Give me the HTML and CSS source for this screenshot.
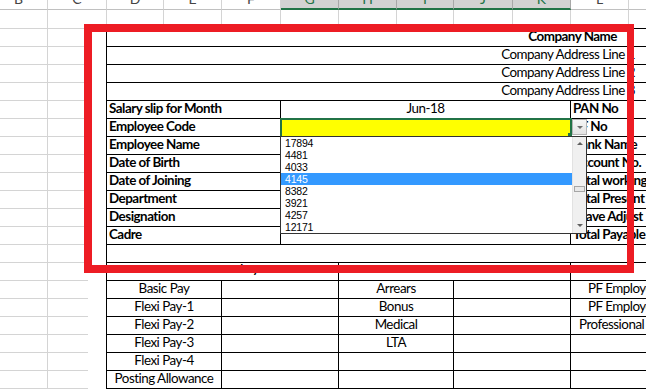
FILE: index.html
```html
<!DOCTYPE html>
<html>
<head>
<meta charset="utf-8">
<title>Salary Slip</title>
<link rel="stylesheet" href="styles.css">
</head>
<body>
<div class="sheet">
  <div class="h"><span>B</span></div><div class="h"><span>C</span></div><div class="h"><span>D</span></div><div class="h"><span>E</span></div><div class="h"><span>F</span></div><div class="h on"><span>G</span></div><div class="h on"><span>H</span></div><div class="h on"><span>I</span></div><div class="h on"><span>J</span></div><div class="h on"><span>K</span></div><div class="h"><span>L</span></div><div class="h"><span>M</span></div>

  <div class="c"></div><div class="c"></div><div class="c top"></div><div class="c top"></div><div class="c top"></div><div class="c top"></div><div class="c top"></div><div class="c top"></div><div class="c top"></div><div class="c top"></div><div class="c top"></div><div class="c top"></div>

  <div class="c"></div><div class="c edge"></div><div class="t s10 r b name">Company Name</div>
  <div class="c"></div><div class="c edge"></div><div class="t s10 r addr">Company Address Line 1</div>
  <div class="c"></div><div class="c edge"></div><div class="t s10 r addr">Company Address Line 2</div>
  <div class="c"></div><div class="c edge"></div><div class="t s10 r addr">Company Address Line 3</div>

  <div class="c"></div><div class="c edge"></div><div class="t s3 b">Salary slip for Month</div><div class="t s5 m">Jun-18</div><div class="t s2 b">PAN No</div>
  <div class="c"></div><div class="c edge"></div><div class="t s3 b">Employee Code</div>
  <div class="t s5 pick">
    <span class="fh"></span>
    <span class="dd"><i></i></span>
    <div class="list">
      <div class="items">
        <div>17894</div><div>4481</div><div>4033</div><div class="hl">4145</div><div>8382</div><div>3921</div><div>4257</div><div>12171</div>
      </div>
      <div class="sb"><i class="up"></i><i class="thumb"></i><i class="dn"></i></div>
    </div>
  </div>
  <div class="t s2 b">PF No</div>
  <div class="c"></div><div class="c edge"></div><div class="t s3 b">Employee Name</div><div class="t s5"></div><div class="t s2 b">Bank Name</div>
  <div class="c"></div><div class="c edge"></div><div class="t s3 b">Date of Birth</div><div class="t s5"></div><div class="t s2 b">Account No.</div>
  <div class="c"></div><div class="c edge"></div><div class="t s3 b">Date of Joining</div><div class="t s5"></div><div class="t s2 b">Total working Days</div>
  <div class="c"></div><div class="c edge"></div><div class="t s3 b">Department</div><div class="t s5"></div><div class="t s2 b">Total Present</div>
  <div class="c"></div><div class="c edge"></div><div class="t s3 b">Designation</div><div class="t s5"></div><div class="t s2 b">Leave Adjust</div>
  <div class="c"></div><div class="c edge"></div><div class="t s3 b">Cadre</div><div class="t s5"></div><div class="t s2 b">Total Payable</div>

  <div class="c"></div><div class="c edge"></div><div class="t s10"></div>
  <div class="c"></div><div class="c edge"></div><div class="t s4 m b hd">Salary</div><div class="t s4"></div><div class="t s2"></div>

  <div class="c"></div><div class="c edge"></div><div class="t s2 m">Basic Pay</div><div class="t s2"></div><div class="t s2 m">Arrears</div><div class="t s2"></div><div class="t s2 pa">PF Employee Share</div>
  <div class="c"></div><div class="c edge"></div><div class="t s2 m">Flexi Pay-1</div><div class="t s2"></div><div class="t s2 m">Bonus</div><div class="t s2"></div><div class="t s2 pa">PF Employer Share</div>
  <div class="c"></div><div class="c edge"></div><div class="t s2 m">Flexi Pay-2</div><div class="t s2"></div><div class="t s2 m">Medical</div><div class="t s2"></div><div class="t s2 pb">Professional Tax</div>
  <div class="c"></div><div class="c edge"></div><div class="t s2 m">Flexi Pay-3</div><div class="t s2"></div><div class="t s2 m">LTA</div><div class="t s2"></div><div class="t s2"></div>
  <div class="c"></div><div class="c edge"></div><div class="t s2 m">Flexi Pay-4</div><div class="t s2"></div><div class="t s2"></div><div class="t s2"></div><div class="t s2"></div>
  <div class="c"></div><div class="c edge"></div><div class="t s2 m">Posting Allowance</div><div class="t s2"></div><div class="t s2"></div><div class="t s2"></div><div class="t s2"></div>
</div>
<div class="frame"></div>
</body>
</html>
```

FILE: styles.css
```css
html, body { margin: 0; padding: 0; }
body {
  position: relative;
  width: 646px;
  height: 389px;
  overflow: hidden;
  background: #fff;
  font-family: Lato, "Liberation Sans", sans-serif;
  font-size: 13.4px;
  letter-spacing: -0.5px;
  color: #000;
}
.sheet {
  display: grid;
  grid-template-columns: 58px 59px 57px 58px 59px 58px 58px 57px 59px 58px 58px 58px;
  grid-template-rows: 10px 19px repeat(20, 18px);
  width: 697px;
  margin-left: -10px;
}
.sheet > div {
  box-sizing: border-box;
  min-width: 0;
  overflow: hidden;
  white-space: nowrap;
}
.h {
  background: #fff;
  color: #444;
  text-align: center;
  font-size: 14px;
  letter-spacing: 0;
  line-height: 16px;
  border-right: 1px solid #d4d4d4;
  border-bottom: 1px solid #c0c0c0;
}
.h span { display: block; margin-top: -9px; }
.h.on {
  background: #d2d2d2;
  color: #217346;
  border-right-color: #a8a8a8;
  border-bottom: 2px solid #217346;
}
.c {
  border-right: 1px solid #d4d4d4;
  border-bottom: 1px solid #d4d4d4;
}
.c.top { border-bottom-color: #000; }
.c.edge {
  border-right-color: #000;
  border-bottom: 0;
  background: linear-gradient(#d4d4d4, #d4d4d4) left bottom / 40px 1px no-repeat;
}
.t {
  display: flex;
  align-items: flex-end;
  padding: 0 2px 2px;
  line-height: 15px;
  border-right: 1px solid #000;
  border-bottom: 1px solid #000;
}
.s2 { grid-column: span 2; }
.s3 { grid-column: span 3; }
.s4 { grid-column: span 4; }
.s5 { grid-column: span 5; }
.s10 { grid-column: span 10; }
.b { font-weight: 700; }
.r { justify-content: flex-end; }
.m { justify-content: center; }
.name { padding-right: 69px; }
.addr { padding-right: 51px; }
.pa { padding-left: 17px; }
.pb { padding-left: 8px; }
.hd { font-size: 12px; padding-bottom: 4px; padding-left: 44px; }

.sheet > .pick {
  position: relative;
  overflow: visible;
  background: #ffff00;
  outline: 2px solid #217346;
  outline-offset: -1px;
}
.fh {
  position: absolute;
  left: 287px;
  top: 14px;
  width: 4px;
  height: 4px;
  background: #217346;
}
.dd {
  position: absolute;
  left: 291px;
  top: 0;
  width: 15px;
  height: 16px;
  box-sizing: border-box;
  border: 1px solid #b4b4b4;
  background: linear-gradient(#f6f6f6, #e3e3e3);
  display: flex;
  align-items: center;
  justify-content: center;
}
.dd i {
  width: 0;
  height: 0;
  border-left: 3px solid transparent;
  border-right: 3px solid transparent;
  border-top: 3px solid #6e6e6e;
}
.list {
  position: absolute;
  left: -1px;
  top: 17px;
  width: 307px;
  height: 98px;
  box-sizing: border-box;
  border: 1px solid #333;
  background: #fff;
  display: flex;
  font-family: "Liberation Sans", Arial, sans-serif;
  font-size: 10.5px;
  letter-spacing: -0.2px;
  line-height: 12px;
  font-weight: 400;
  z-index: 2;
}
.items { flex: 1; }
.items div { height: 12px; padding-left: 4px; }
.items .hl { background: #3399ff; color: #fff; }
.sb {
  width: 14px;
  box-sizing: border-box;
  background: #f0f0f0;
  border-left: 1px solid #e2e2e2;
  display: flex;
  flex-direction: column;
  align-items: center;
}
.up, .dn {
  width: 0;
  height: 0;
  border-left: 3px solid transparent;
  border-right: 3px solid transparent;
}
.up { margin-top: 5px; border-bottom: 3px solid #606060; }
.thumb {
  margin-top: 41px;
  width: 11px;
  height: 6px;
  box-sizing: border-box;
  border: 1px solid #a6a6a6;
  background: #e8e8e8;
}
.dn { margin-top: auto; margin-bottom: 6px; border-top: 3px solid #606060; }

.frame {
  position: absolute;
  left: 84px;
  top: 24px;
  width: 550px;
  height: 249px;
  box-sizing: border-box;
  border: 8px solid #ed1c24;
  border-right-width: 7px;
  z-index: 5;
}
```
